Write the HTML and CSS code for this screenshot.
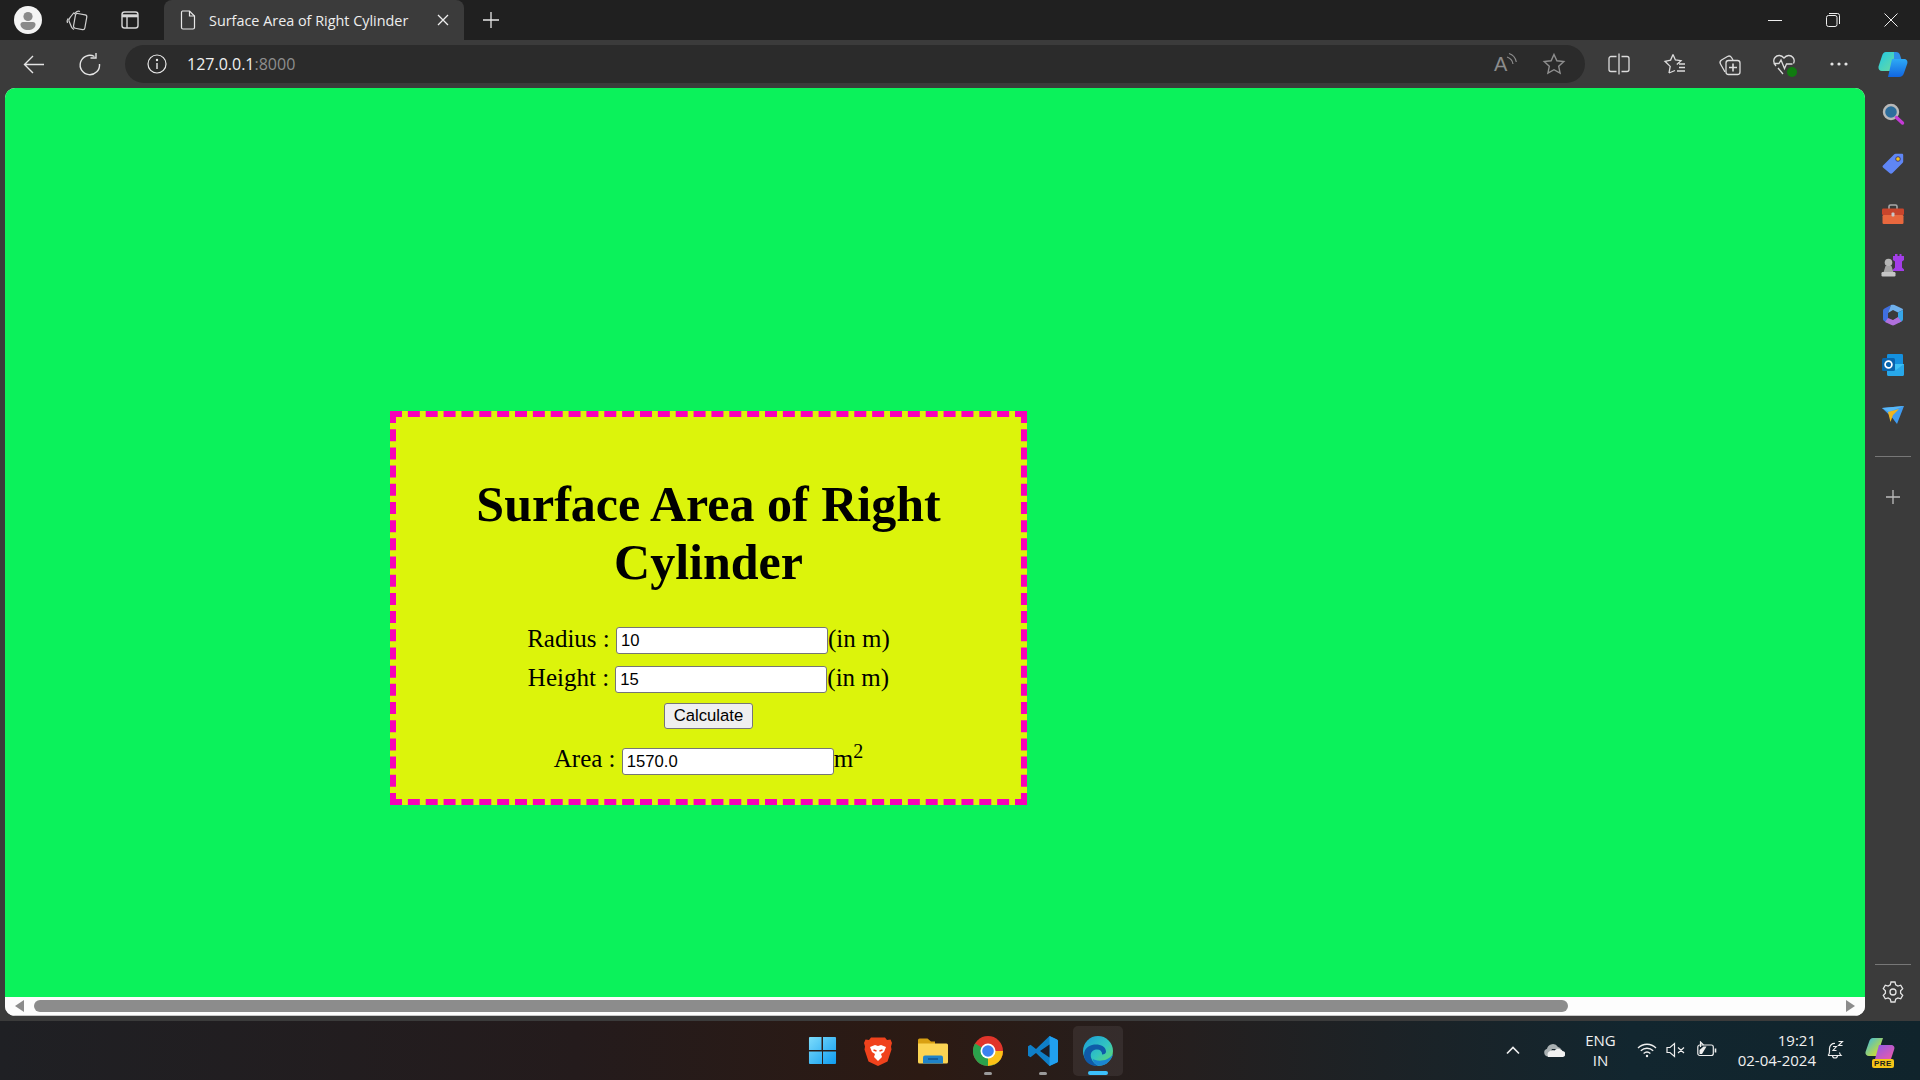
FILE: index.html
```html
<!DOCTYPE html>
<html lang="en">
<head>
    <meta charset="UTF-8">
    <title>Surface Area of Right Cylinder</title>
    <link rel="stylesheet" href="styles.css">
</head>
<body>
    <!-- Tab strip -->
    <div class="tabbar">
        <span class="profile">
            <svg viewBox="0 0 28 28" width="28" height="28"><circle cx="14" cy="14" r="14" fill="#f4f4f4"/><circle cx="14" cy="10.500" r="4.600" fill="#8a8a8a"/><path d="M6.500 18.500c0-1.500 1-2.500 2.500-2.500h10c1.500 0 2.500 1 2.500 2.500 0 3.500-3.500 5.500-7.500 5.500s-7.500-2-7.500-5.500z" fill="#8a8a8a"/></svg>
        </span>
        <svg class="tb-collections" viewBox="0 0 22 22" width="22" height="22" fill="none" stroke="#cfcfcf" stroke-width="1.200"><rect x="8.500" y="5" width="11.500" height="15" rx="2" transform="rotate(10 14 12)"/><path d="M8 5l3-2.500c.8-.5 2-.5 3 0M4.500 8L8 3.500M4.500 8C3.500 9 2.500 10 3 12l2.500 6c.5 1.200 1.500 2 2.500 2.500M2 9.500C1 11 1 12.500 1.500 14"/></svg>
        <svg class="tb-vertical" viewBox="0 0 20 20" width="20" height="20" fill="none" stroke="#d6d6d6" stroke-width="1.400"><rect x="2" y="2" width="16" height="16" rx="2.500"/><path d="M2 5.800h16" stroke-width="3"/><path d="M7 6v12"/></svg>
        <div class="tab">
            <svg viewBox="0 0 16 20" width="16" height="20" fill="none" stroke="#e8e8e8" stroke-width="1.200"><path d="M2.500 1h7l5 5v11.500a1.500 1.500 0 0 1-1.500 1.500h-10a1.500 1.500 0 0 1-1.500-1.500v-15a1.500 1.500 0 0 1 1-1.500z"/><path d="M9.500 1v5h5"/></svg>
            <span class="tab-title">Surface Area of Right Cylinder</span>
            <svg class="tab-close" viewBox="0 0 12 12" width="12" height="12" stroke="#eee" stroke-width="1.300"><path d="M1 1l10 10M11 1L1 11"/></svg>
        </div>
        <svg class="tab-new" viewBox="0 0 18 18" width="18" height="18" stroke="#e6e6e6" stroke-width="1.300"><path d="M9 1v16M1 9h16"/></svg>
        <div class="win-controls">
            <span class="win-btn"><svg viewBox="0 0 14 14" width="14" height="14" stroke="#eee" stroke-width="1"><path d="M0 7.500h14"/></svg></span>
            <span class="win-btn"><svg viewBox="0 0 14 14" width="14" height="14" fill="none" stroke="#eee" stroke-width="1"><rect x=".5" y="2.500" width="10.500" height="11" rx="2"/><path d="M3 .5h8.500a2 2 0 0 1 2 2V11"/></svg></span>
            <span class="win-btn"><svg viewBox="0 0 14 14" width="14" height="14" stroke="#eee" stroke-width="1"><path d="M.5.5l13 13M13.500.5l-13 13"/></svg></span>
        </div>
    </div>

    <!-- Address bar and toolbar -->
    <div class="toolbar">
        <svg class="tool-back" viewBox="0 0 24 24" width="24" height="24" fill="none" stroke="#e4e4e4" stroke-width="1.400"><path d="M22 12.500H3M11 4l-8.500 8.500L11 21"/></svg>
        <svg class="tool-reload" viewBox="0 0 24 24" width="24" height="24" fill="none" stroke="#e4e4e4" stroke-width="1.400"><path d="M16.500 4.500a9.700 9.700 0 1 0 5 7.500"/><path d="M18 1v5h-5.500"/></svg>
        <div class="address">
            <svg viewBox="0 0 20 20" width="20" height="20" fill="none" stroke="#e8e8e8" stroke-width="1.200"><circle cx="10" cy="10" r="9"/><path d="M10 9v6" stroke-width="1.400"/><circle cx="10" cy="6" r=".6" fill="#e8e8e8"/></svg>
            <span class="url">127.0.0.1<span class="url-port">:8000</span></span>
            <svg class="addr-read" viewBox="0 0 24 24" width="24" height="24" fill="none" stroke="#8c8c8c" stroke-width="1.200"><text x="1" y="19" font-family="Liberation Sans" font-size="20" fill="#8c8c8c" stroke="none">A</text><path d="M14 5c3 1 5.500 3.500 6 7M16 1.500c4 1.200 6.500 4.500 7.300 8.500"/></svg>
            <svg class="addr-star" viewBox="0 0 24 24" width="24" height="24" fill="none" stroke="#8f8f8f" stroke-width="1.400"><path d="M12 2.500l2.900 6.300 6.900.8-5.100 4.700 1.400 6.800-6.100-3.400-6.100 3.400 1.400-6.800-5.100-4.700 6.900-.8z"/></svg>
        </div>
        <div class="tool-icons">
            <svg viewBox="0 0 24 24" width="24" height="24" fill="none" stroke="#dcdcdc" stroke-width="1.300"><path d="M9.500 4.500H4a2 2 0 0 0-2 2v11a2 2 0 0 0 2 2h5.500M14.500 4.500H20a2 2 0 0 1 2 2v11a2 2 0 0 1-2 2h-5.500M12 1.500v21"/></svg>
            <svg viewBox="0 0 24 24" width="24" height="24" fill="none" stroke="#dcdcdc" stroke-width="1.300"><path d="M11 2.500l2.400 5.500 5.600.7-4.200 3.800M7 21l1.200-6.600L3 9.300l5.600-1.200 2.400-5.600M7 21l6-2.500"/><path d="M17 12h6M17 15.500h6M15 19h8"/></svg>
            <svg viewBox="0 0 24 24" width="24" height="24" fill="none" stroke="#dcdcdc" stroke-width="1.300"><path d="M8 20L3.500 12a3 3 0 0 1 1-4l6-3.500a3 3 0 0 1 4 1L16 8"/><rect x="9" y="8.500" width="14" height="14" rx="2.500"/><path d="M16 11.500v8M12 15.500h8" stroke-width="1.600"/></svg>
            <span class="health">
                <svg viewBox="0 0 24 24" width="24" height="24" fill="none" stroke="#dcdcdc" stroke-width="1.300"><path d="M4 14C1.500 11 1 8 3 5.500c2.500-3 6.500-2.500 9 .5 2.500-3 6.500-3.500 9-.5 1.500 2 1.500 4 .5 6M1.500 11.500H7l2-3.500 3.500 8.500 2-4.500h6M6 16l5 6"/></svg>
                <span class="health-check"></span>
            </span>
            <svg viewBox="0 0 24 24" width="24" height="24" fill="#e4e4e4"><circle cx="5" cy="12" r="1.600"/><circle cx="12" cy="12" r="1.600"/><circle cx="19" cy="12" r="1.600"/></svg>
            <svg class="tool-copilot" viewBox="0 0 30 28" width="30" height="28">
                <defs>
                    <linearGradient id="cpA" x1="0" y1="0" x2="1" y2="1"><stop offset="0" stop-color="#1ec8e8"/><stop offset="1" stop-color="#6fdc9a"/></linearGradient>
                    <linearGradient id="cpB" x1="0" y1="0" x2="0" y2="1"><stop offset="0" stop-color="#2ea9f5"/><stop offset="1" stop-color="#1266e0"/></linearGradient>
                </defs>
                <path d="M8 2h10l-6 19H4C1.500 21 0 19 .5 16.500L4 6c.8-2.500 2-4 4-4z" fill="url(#cpA)"/>
                <path d="M16 2h2c2 0 3.500 1 4 3l2 6h-8z" fill="#2f8fe8"/>
                <path d="M14 9h12c2.500 0 4 2 3.300 4.500L26 23c-.8 2.500-2.500 4-5 4H10z" fill="url(#cpB)"/>
            </svg>
        </div>
    </div>

    <div class="main">
        <div class="viewport">
            <div class="page">
                <div class="card">
                    <h1>Surface Area of Right Cylinder</h1>
                    <form class="calc">
                        <div class="field">Radius : <input class="num" type="text" value="10">(in m)</div>
                        <div class="field">Height : <input class="num" type="text" value="15">(in m)</div>
                        <button class="calc-btn" type="button">Calculate</button>
                        <div class="field field-area">Area : <input class="num" type="text" value="1570.0">m<sup>2</sup></div>
                    </form>
                </div>
            </div>
            <div class="hscroll">
                <span class="arrow-left"></span>
                <span class="thumb"></span>
                <span class="arrow-right"></span>
            </div>
        </div>

        <!-- Edge sidebar -->
        <div class="sidebar">
            <svg viewBox="0 0 24 24" width="24" height="24"><circle cx="10" cy="10" r="7" fill="#2c6d9c" stroke="#b8b8b8" stroke-width="2.400"/><path d="M15.500 15.500l6 5.500" stroke="#c43ad6" stroke-width="3.400" stroke-linecap="round"/></svg>
            <svg viewBox="0 0 24 24" width="24" height="24"><path d="M2 13.500L13 2.500c.5-.5 1-.7 1.600-.7H21c.7 0 1.200.5 1.200 1.200v6.500c0 .6-.2 1.100-.7 1.600L11.500 21c-1 1-2 1-3 0L2 15.500c-.6-.6-.6-1.400 0-2z" fill="#5f86f5"/><circle cx="17" cy="7" r="2.300" fill="#f2c21a" stroke="#3a3a80" stroke-width="1"/></svg>
            <svg viewBox="0 0 24 24" width="24" height="24"><path d="M8 7V4.500c0-1 .5-1.500 1.500-1.500h5c1 0 1.500.5 1.500 1.500V7" fill="none" stroke="#a9a9a9" stroke-width="1.600"/><rect x="1" y="6.500" width="22" height="6.500" rx="1.200" fill="#c8452c"/><rect x="1.500" y="13" width="21" height="9" rx="1.200" fill="#e8683e"/><rect x="10.500" y="10.500" width="3" height="4" rx="1" fill="#c8c8c8"/></svg>
            <svg viewBox="0 0 24 24" width="24" height="24"><path d="M14 1h2.500v2h2V1h2v2h2.500v4l-2 1.500v6l2 2V18H12v-1.500l2-2v-6L12 7V3h2z" fill="#a33ee8"/><circle cx="7.500" cy="9.500" r="3.800" fill="#b5b5b5"/><path d="M4.500 13h6l2 6.500h-10z" fill="#a5a5a5"/><rect x="0.500" y="19" width="14" height="4.500" rx="1.200" fill="#c5c5c5"/></svg>
            <svg viewBox="0 0 24 24" width="24" height="24">
                <path d="M10 2l-6.500 3.500c-1 .5-1.500 1.300-1.500 2.500v8c0 1 .5 1.800 1.500 2.300L7 20V10z" fill="#3f6fe0"/>
                <path d="M10 2c1-.5 2.500-.5 3.500 0l7.500 3.500c.6.300 1 .8 1 1.500L17 9.500 12 7 7 10z" fill="#6fb0ec"/>
                <path d="M22 7v9c0 1.200-.5 2-1.500 2.500L17 20V9.500z" fill="#36a6e8"/>
                <path d="M4 19l6.500 3c1 .5 2 .5 3 0l7-3.500L17 14l-5 3-5-2z" fill="#b070dc"/>
                <path d="M8 11l4-2.500 4 2v3.500l-4 2.500-4-2z" fill="#3b3b3b"/>
            </svg>
            <svg viewBox="0 0 24 24" width="24" height="24"><rect x="6" y="1" width="16" height="12" rx="1.200" fill="#1490df"/><path d="M6 11h17v10.500c0 .8-.6 1.500-1.400 1.500H7.400c-.8 0-1.400-.7-1.400-1.500z" fill="#28a8ea"/><path d="M23 11l-8 6-9-6" fill="#50d9ff" opacity=".5"/><rect x="1" y="5" width="13" height="13" rx="1.500" fill="#0a64ad"/><circle cx="7.500" cy="11.500" r="3.400" fill="none" stroke="#fff" stroke-width="1.700"/></svg>
            <svg viewBox="0 0 24 24" width="24" height="24"><path d="M1 5l22-2-7 18-4.500-6z" fill="#3f9bf0"/><path d="M1 5l22-2-15 6z" fill="#58b8f8"/><path d="M7 9l2.500 10 2.500-7 6-6z" fill="#f0b51e"/></svg>
            <span class="side-line"></span>
            <svg class="side-plus" viewBox="0 0 16 16" width="16" height="16" stroke="#bdbdbd" stroke-width="1.300"><path d="M8 1v14M1 8h14"/></svg>
            <span class="side-line side-line-low"></span>
            <svg class="side-gear" viewBox="0 0 24 24" width="24" height="24" fill="none" stroke="#e4e4e4" stroke-width="1.300"><circle cx="12" cy="12" r="3"/><path d="M10 2h4l.7 2.900 2.200 1.200 2.800-.9 2 3.500-2.100 2v2.600l2.100 2-2 3.500-2.800-.9-2.200 1.200L14 22h-4l-.7-2.900-2.200-1.200-2.800.9-2-3.500 2.100-2v-2.600l-2.100-2 2-3.500 2.800.9 2.200-1.200z"/></svg>
        </div>
    </div>

    <!-- Windows taskbar -->
    <div class="taskbar">
        <div></div>
        <div class="task-apps">
            <span class="task-app">
                <svg viewBox="0 0 30 30" width="29" height="29">
                    <defs><linearGradient id="winG" x1="0" y1="0" x2="1" y2="1"><stop offset="0" stop-color="#7ddcfb"/><stop offset="1" stop-color="#0f9cf0"/></linearGradient></defs>
                    <path d="M1 2a1 1 0 0 1 1-1h12v13.500H1zM15.500 1H28a1 1 0 0 1 1 1v12.500H15.500zM1 16h13.500v13H2a1 1 0 0 1-1-1zM15.500 16H29v12a1 1 0 0 1-1 1H15.500z" fill="url(#winG)"/>
                </svg>
            </span>
            <span class="task-app">
                <svg viewBox="0 0 30 30" width="30" height="30"><path d="M8 1.500h14l2 2.500 3.500-.5L29 7l-1 3.500.5 3-4 12L15 30l-9.500-4.500-4-12 .5-3L1 7l1.500-3.500L6 4z" fill="#f0421c"/><path d="M7 11l5-2 3 1 3-1 5 2-2 5-3 2 1 3-4 4-4-4 1-3-3-2z" fill="#fff"/><path d="M10.500 14l3 1M19.500 14l-3 1" stroke="#f0421c" stroke-width="1.400"/></svg>
            </span>
            <span class="task-app">
                <svg viewBox="0 0 30 30" width="30" height="30"><path d="M0 4a1.500 1.500 0 0 1 1.500-1.500h8L13 5.500h4V9H0z" fill="#d9a012"/><path d="M0 7.500h28.500a1.500 1.500 0 0 1 1.500 1.500v17a1.500 1.500 0 0 1-1.500 1.500h-27A1.500 1.500 0 0 1 0 26z" fill="#fbd453"/><path d="M5 27.500v-6a2 2 0 0 1 2-2h16a2 2 0 0 1 2 2v6z" fill="#1f83c9"/><path d="M10 23h10" stroke="#0e4d85" stroke-width="1.300"/></svg>
            </span>
            <span class="task-app">
                <svg viewBox="0 0 30 30" width="30" height="30"><circle cx="15" cy="15" r="15" fill="#e0352b"/><path d="M15 15L28 22.500A15 15 0 0 1 15 30 15 15 0 0 1 2 7.500z" fill="#2ba24c"/><path d="M15 15h15a15 15 0 0 1-8 13.200L15 30z" fill="#fbc116"/><circle cx="15" cy="15" r="7.500" fill="#fff"/><circle cx="15" cy="15" r="5.800" fill="#3b82f0"/></svg>
                <span class="task-dot"></span>
            </span>
            <span class="task-app">
                <svg viewBox="0 0 30 30" width="30" height="30"><path d="M21.500 0L29 3.500c.6.300 1 .9 1 1.600v19.800c0 .7-.4 1.300-1 1.600L21.500 30 8 17l-5.500 4.300L0 19.800v-9.600l2.500-1.500L8 13z" fill="#0f7fc8"/><path d="M21.500 0L29 3.500c.6.300 1 .9 1 1.600v19.800c0 .7-.4 1.300-1 1.600L21.500 30z" fill="#21a0f0"/><path d="M21.500 8.500L12 15l9.500 6.500z" fill="#1b1d26"/></svg>
                <span class="task-dot"></span>
            </span>
            <span class="task-app task-app-on">
                <svg viewBox="0 0 30 30" width="30" height="30">
                    <defs><linearGradient id="edgeG" x1="0" y1="0" x2="1" y2="1"><stop offset="0" stop-color="#1a9ad8"/><stop offset=".55" stop-color="#32c5c0"/><stop offset="1" stop-color="#6edc5a"/></linearGradient></defs>
                    <circle cx="15" cy="15" r="15" fill="url(#edgeG)"/>
                    <path d="M1 19C1 11 8 8.500 13 8.500c5 0 10 2.500 10 7 0 2-1.500 3-4 3 .5-3-2-5.500-6-5-4 .5-6 4-5 8 1 3.500 4.500 8 9 8.500C9 31 1 27 1 19z" fill="#0f5aa8"/>
                    <path d="M30 18c-1 6-7 12-13.500 11.800-4-.5-6.500-3.500-6.800-7C12 25 24 27 30 18z" fill="#1a85d0"/>
                </svg>
                <span class="task-dot task-dot-on"></span>
            </span>
        </div>
        <div class="tray">
            <svg class="tray-chev" viewBox="0 0 16 10" width="16" height="10" fill="none" stroke="#eee" stroke-width="1.700"><path d="M2 8.500l6-6 6 6"/></svg>
            <svg class="tray-cloud" viewBox="0 0 22 14" width="22" height="14"><path d="M5 13.500a4 4 0 0 1-1-7.800A6 6 0 0 1 15 4a4.800 4.800 0 0 1 3 2H9z" fill="#a9b0b2"/><path d="M5 14h14a3 3 0 0 0 .5-6C18 5 13 5 11.500 7.500 8 6.500 3 9 5 14z" fill="#f1f1f1"/></svg>
            <div class="tray-lang"><span>ENG</span><span>IN</span></div>
            <svg class="tray-wifi" viewBox="0 0 20 16" width="20" height="16" fill="none" stroke="#eee" stroke-width="1.300"><path d="M1 6c5-5 13-5 18 0M3.800 8.800c3.500-3.400 8.900-3.400 12.400 0M6.600 11.500c2-1.800 4.800-1.800 6.800 0"/><circle cx="10" cy="14" r="1.200" fill="#eee" stroke="none"/></svg>
            <svg class="tray-sound" viewBox="0 0 20 16" width="20" height="16" fill="none" stroke="#eee" stroke-width="1.200"><path d="M1 5.500v5h3l4.500 4V1.500L4 5.500zM12 5.500l6 5.500M18 5.500l-6 5.500"/></svg>
            <svg class="tray-batt" viewBox="0 0 20 18" width="20" height="18" fill="none" stroke="#eee" stroke-width="1.200"><rect x=".8" y="4" width="15.500" height="10.500" rx="2"/><path d="M18.500 7.500v4" stroke-width="1.600"/><path d="M2.500 13V9l4-3.500h3L5 13z" fill="#eee" stroke="none"/><path d="M3.500 6V1l3 3"/></svg>
            <div class="tray-clock"><span>19:21</span><span>02-04-2024</span></div>
            <svg class="tray-bell" viewBox="0 0 18 20" width="18" height="20" fill="none" stroke="#eee" stroke-width="1.200"><path d="M2 15.500c1-1 1.500-2 1.500-4V8.500A5 5 0 0 1 9 3.500M2 15.500h13c-.8-.8-1.300-1.700-1.500-3M6.500 15.500a2.500 2.500 0 0 0 5 0"/><path d="M7 6.500h3.500L7 10.500h3.500M12.500 1.500h4l-4 4h4" stroke-width="1.100"/></svg>
            <span class="tray-pre">
                <svg viewBox="0 0 30 26" width="30" height="26">
                    <defs><linearGradient id="preG" x1="0" y1="0" x2="1" y2="1"><stop offset="0" stop-color="#35b8e8"/><stop offset=".7" stop-color="#b8d84a"/><stop offset="1" stop-color="#e8d63a"/></linearGradient><linearGradient id="preH" x1="0" y1="0" x2="1" y2="1"><stop offset="0" stop-color="#8a5ae8"/><stop offset="1" stop-color="#f05aa8"/></linearGradient></defs>
                    <path d="M8 1h10l-6 18H4C1.500 19 0 17 .5 15L4 5c.8-2.500 2-4 4-4z" fill="url(#preG)"/>
                    <path d="M14 8h12c2.500 0 4 2 3.300 4L26 22H10z" fill="url(#preH)"/>
                </svg>
                <span class="pre-tag">PRE</span>
            </span>
        </div>
    </div>
</body>
</html>
```

FILE: styles.css
```css
* {
    box-sizing: border-box;
}

html, body {
    margin: 0;
    height: 100%;
    overflow: hidden;
}

body {
    display: flex;
    flex-direction: column;
    background-color: #3b3b3b;
    font-family: "Open Sans", "Noto Sans", sans-serif;
    color: #eee;
}

svg {
    display: block;
    flex: none;
}

/* tab strip */
.tabbar {
    display: flex;
    align-items: center;
    height: 40px;
    background-color: #202020;
}

.profile {
    margin-left: 14px;
}

.tb-collections {
    margin-left: 24px;
}

.tb-vertical {
    margin-left: 32px;
}

.tab {
    display: flex;
    align-items: center;
    align-self: stretch;
    width: 300px;
    margin-left: 24px;
    padding: 0 15px 0 16px;
    background-color: #3b3b3b;
    border-radius: 8px 8px 0 0;
}

.tab-title {
    flex: 1;
    margin-left: 13px;
    font-size: 14.400px;
    color: #eee;
    white-space: nowrap;
}

.tab-new {
    margin-left: 18px;
}

.win-controls {
    display: flex;
    margin-left: auto;
}

.win-btn {
    display: flex;
    align-items: center;
    justify-content: center;
    width: 58px;
}

/* toolbar */
.toolbar {
    display: flex;
    align-items: center;
    height: 48px;
}

.tool-back {
    margin-left: 22px;
}

.tool-reload {
    margin-left: 32px;
}

.address {
    display: flex;
    align-items: center;
    width: 1460px;
    height: 38px;
    margin-left: 23px;
    padding: 0 19px 0 22px;
    background-color: #2b2b2b;
    border-radius: 19px;
}

.url {
    margin-left: 20px;
    font-size: 16px;
    color: #f0f0f0;
}

.url-port {
    color: #8e8e8e;
}

.addr-read {
    margin-left: auto;
}

.addr-star {
    margin-left: 25px;
}

.tool-icons {
    display: flex;
    align-items: center;
    gap: 31px;
    margin-left: 22px;
}

.health {
    position: relative;
    display: block;
}

.health-check {
    position: absolute;
    right: -1px;
    bottom: -1px;
    width: 10px;
    height: 10px;
    border-radius: 50%;
    background-color: #107c10;
}

.tool-copilot {
    margin-left: -4px;
}

/* page area */
.main {
    display: flex;
    height: 928px;
}

.viewport {
    display: flex;
    flex-direction: column;
    width: 1860px;
    margin-left: 5px;
    background-color: #fff;
    border-radius: 10px;
    overflow: hidden;
}

.page {
    flex: 1;
    padding: 323px 0 0 385px;
    background-color: #0bf25b;
}

.card {
    width: 637px;
    height: 394px;
    padding: 0 20px;
    background-color: #dcf40b;
    border: 6px dashed #f800b8;
    text-align: center;
    font-family: "Liberation Serif", "Times New Roman", serif;
    font-size: 25px;
    color: #000;
}

h1 {
    margin: 58px 0 33px;
    font-size: 50px;
    line-height: 58px;
    font-weight: bold;
}

.field {
    height: 39px;
    line-height: 29px;
}

.num {
    width: 212px;
    height: 27px;
    padding: 2px 3px 0 4px;
    font-family: "Liberation Sans", Arial, sans-serif;
    font-size: 16.670px;
    vertical-align: 1px;
    background-color: #fff;
    color: #000;
    border: 1.500px solid #767676;
    border-radius: 3px;
}

.calc-btn {
    display: block;
    width: 89px;
    height: 26px;
    margin: 1px auto 15px;
    padding: 0;
    font-family: "Liberation Sans", Arial, sans-serif;
    font-size: 16.670px;
    color: #000;
    background-color: #efefef;
    border: 1.500px solid #767676;
    border-radius: 3px;
}

.field-area .num {
    vertical-align: 0;
}

sup {
    font-size: 20px;
    line-height: 0;
}

/* horizontal scrollbar */
.hscroll {
    display: flex;
    align-items: center;
    height: 19px;
    padding: 0 10px;
    background-color: #fdfdfd;
    border-bottom: 1px solid #c8c8c8;
}

.arrow-left {
    width: 0;
    height: 0;
    border-top: 6px solid transparent;
    border-bottom: 6px solid transparent;
    border-right: 9px solid #8c8c8c;
}

.thumb {
    width: 1534px;
    height: 12px;
    margin-left: 10px;
    background-color: #8c8c8c;
    border-radius: 6px;
}

.arrow-right {
    width: 0;
    height: 0;
    margin-left: auto;
    border-top: 6px solid transparent;
    border-bottom: 6px solid transparent;
    border-left: 9px solid #8c8c8c;
}

/* sidebar */
.sidebar {
    display: flex;
    flex-direction: column;
    align-items: center;
    flex: 1;
    gap: 26.200px;
    padding: 14px 0 12px;
}

.side-line {
    width: 36px;
    height: 1px;
    margin-top: 3px;
    background-color: #777;
}

.side-plus {
    margin-top: 5px;
}

.side-line-low {
    margin-top: auto;
}

.side-gear {
    margin-top: -11px;
}

/* taskbar */
.taskbar {
    display: grid;
    grid-template-columns: 1fr auto 1fr;
    align-items: center;
    height: 59px;
    margin-top: 5px;
    background: linear-gradient(90deg, #1f2024 0%, #241b1c 30%, #2c1a13 48%, #241f1f 62%, #12262f 85%, #10242c 100%);
}

.task-apps {
    display: flex;
    gap: 5px;
}

.task-app {
    position: relative;
    display: flex;
    align-items: center;
    justify-content: center;
    width: 50px;
    height: 50px;
}

.task-app-on {
    background-color: rgba(255, 255, 255, 0.07);
    border-radius: 5px;
}

.task-dot {
    position: absolute;
    left: 21px;
    bottom: 1px;
    width: 8px;
    height: 3px;
    background-color: #9a9a9a;
    border-radius: 2px;
}

.task-dot-on {
    left: 15px;
    width: 20px;
    height: 4px;
    background-color: #3cc0fa;
}

.tray {
    display: flex;
    align-items: center;
    justify-content: flex-end;
    padding-right: 25px;
    margin-bottom: 2px;
    font-size: 15px;
    color: #f0f0f0;
}

.tray-cloud {
    margin-left: 22px;
}

.tray-lang {
    display: flex;
    flex-direction: column;
    align-items: center;
    margin-left: 20px;
    line-height: 20px;
}

.tray-wifi {
    margin-left: 21px;
}

.tray-sound {
    margin-left: 9px;
}

.tray-batt {
    margin-left: 11px;
}

.tray-clock {
    display: flex;
    flex-direction: column;
    align-items: flex-end;
    margin-left: 21px;
    line-height: 20px;
}

.tray-bell {
    margin-left: 10px;
}

.tray-pre {
    position: relative;
    display: block;
    margin-left: 21px;
}

.pre-tag {
    position: absolute;
    left: 7px;
    bottom: -5px;
    padding: 0 2px;
    font-family: "Liberation Sans", Arial, sans-serif;
    font-size: 8px;
    line-height: 9px;
    font-weight: bold;
    letter-spacing: 0.5px;
    color: #1c1c1c;
    background-color: #f5c518;
    border-radius: 2px;
}
```
